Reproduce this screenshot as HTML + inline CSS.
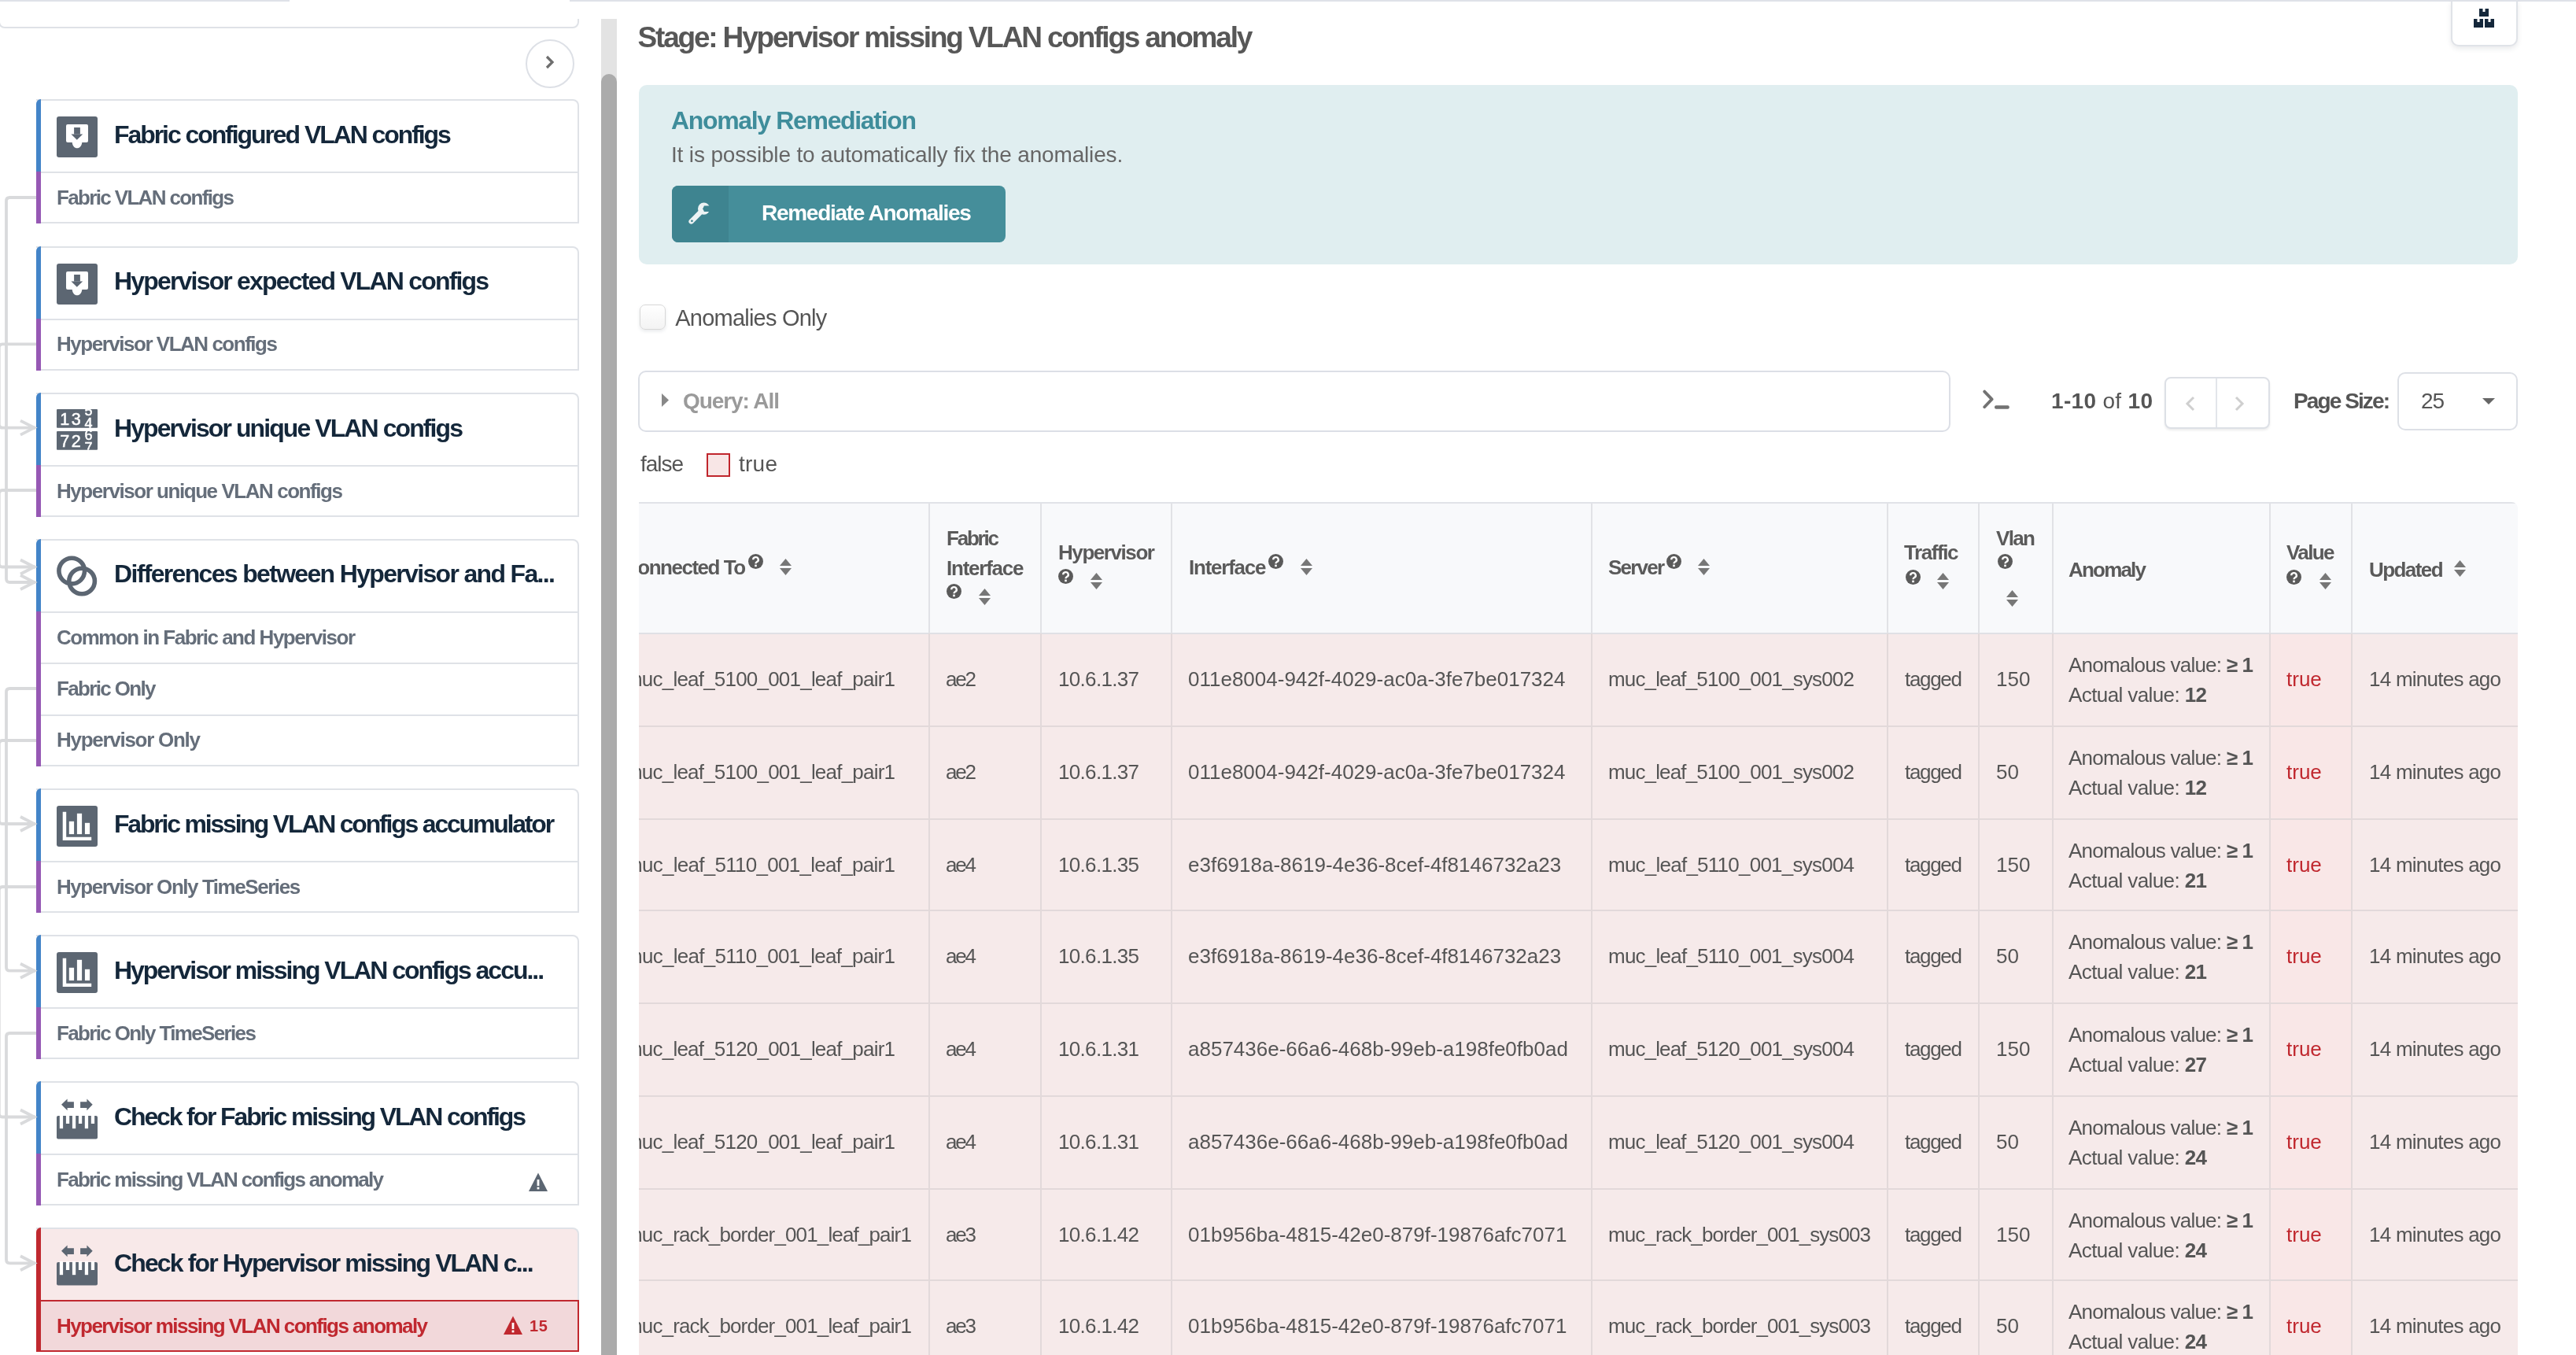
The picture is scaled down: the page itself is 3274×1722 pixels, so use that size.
<!DOCTYPE html><html><head><meta charset="utf-8"><style>html,body{margin:0;padding:0;width:3274px;height:1722px;overflow:hidden;background:#fff;position:relative;font-family:"Liberation Sans",sans-serif}.t{position:absolute;white-space:nowrap;line-height:1}#w{position:absolute;left:0;top:0;width:3274px;height:1722px;overflow:hidden;will-change:transform}</style></head><body><div id="w">
<div style="position:absolute;left:0px;top:0px;width:368px;height:2px;background:#dfe2e8"></div>
<div style="position:absolute;left:724px;top:0px;width:2550px;height:2px;background:#dfe2e8"></div>
<div style="position:absolute;left:0;top:24px;width:764px;height:1698px;overflow:hidden">
<div style="position:absolute;left:-2px;top:-40px;width:734px;height:48px;border:2px solid #dfe2e7;border-radius:8px;background:#fff"></div>
<div style="position:absolute;left:668px;top:26px;width:58px;height:58px;border:2px solid #dde0e6;border-radius:50%;background:#fff"></div>
<svg style="position:absolute;left:690px;top:45px" width="18" height="20" viewBox="0 0 18 20"><path d="M5 3 L12 10 L5 17" stroke="#6e6e6e" stroke-width="3.2" fill="none" stroke-linecap="butt" stroke-linejoin="miter"/></svg>
</div>
<div style="position:absolute;left:764px;top:24px;width:20px;height:1698px;background:#e3e3e3"></div>
<div style="position:absolute;left:764px;top:94px;width:20px;height:1700px;background:#ababab;border-radius:10px 10px 0 0"></div>
<div style="position:absolute;left:46px;top:126px;width:690px;height:158.0px;box-sizing:border-box;border:2px solid #dfe2e7;border-left:none;border-radius:0 8px 0 0;background:#fff"></div>
<div style="position:absolute;left:46px;top:126px;width:6px;height:92px;background:#4384c8;border-radius:7px 0 0 0"></div>
<div style="position:absolute;left:52px;top:218.0px;width:684px;height:2.0px;background:#dfe2e7"></div>
<div style="position:absolute;left:46px;top:218.0px;width:6px;height:66.0px;background:#9658b4"></div>
<div class="t" style="left:72.0px;top:237.5px;font-size:26px;font-weight:700;color:#656e7a;letter-spacing:-1.65px;">Fabric VLAN configs</div>
<svg style="position:absolute;left:72px;top:148px" width="52" height="52" viewBox="0 0 52 52">
<rect x="0" y="0" width="52" height="52" rx="3" fill="#5c6672"/>
<path d="M14 10 h24 a2 2 0 0 1 2 2 v19 a2 2 0 0 1 -2 2 h-5.7 c-0.5 4.5 -3 7.3 -6.3 7.3 c-3.3 0 -5.8 -2.8 -6.3 -7.3 h-5.7 a2 2 0 0 1 -2 -2 v-19 a2 2 0 0 1 2 -2 z" fill="#fff"/>
<rect x="22.1" y="14" width="7.8" height="8.6" fill="#5c6672"/>
<path d="M18.4 22.4 h14.8 l-7.4 7.4 z" fill="#5c6672"/>
</svg>
<div class="t" style="left:145.0px;top:154.9px;font-size:32px;font-weight:700;color:#14273a;letter-spacing:-2.07px;">Fabric configured VLAN configs</div>
<div style="position:absolute;left:46px;top:312.5px;width:690px;height:158.0px;box-sizing:border-box;border:2px solid #dfe2e7;border-left:none;border-radius:0 8px 0 0;background:#fff"></div>
<div style="position:absolute;left:46px;top:312.5px;width:6px;height:92px;background:#4384c8;border-radius:7px 0 0 0"></div>
<div style="position:absolute;left:52px;top:404.5px;width:684px;height:2.0px;background:#dfe2e7"></div>
<div style="position:absolute;left:46px;top:404.5px;width:6px;height:66.0px;background:#9658b4"></div>
<div class="t" style="left:72.0px;top:424.0px;font-size:26px;font-weight:700;color:#656e7a;letter-spacing:-1.48px;">Hypervisor VLAN configs</div>
<svg style="position:absolute;left:72px;top:334.5px" width="52" height="52" viewBox="0 0 52 52">
<rect x="0" y="0" width="52" height="52" rx="3" fill="#5c6672"/>
<path d="M14 10 h24 a2 2 0 0 1 2 2 v19 a2 2 0 0 1 -2 2 h-5.7 c-0.5 4.5 -3 7.3 -6.3 7.3 c-3.3 0 -5.8 -2.8 -6.3 -7.3 h-5.7 a2 2 0 0 1 -2 -2 v-19 a2 2 0 0 1 2 -2 z" fill="#fff"/>
<rect x="22.1" y="14" width="7.8" height="8.6" fill="#5c6672"/>
<path d="M18.4 22.4 h14.8 l-7.4 7.4 z" fill="#5c6672"/>
</svg>
<div class="t" style="left:145.0px;top:341.4px;font-size:32px;font-weight:700;color:#14273a;letter-spacing:-1.82px;">Hypervisor expected VLAN configs</div>
<div style="position:absolute;left:46px;top:499px;width:690px;height:158.0px;box-sizing:border-box;border:2px solid #dfe2e7;border-left:none;border-radius:0 8px 0 0;background:#fff"></div>
<div style="position:absolute;left:46px;top:499px;width:6px;height:92px;background:#4384c8;border-radius:7px 0 0 0"></div>
<div style="position:absolute;left:52px;top:591.0px;width:684px;height:2.0px;background:#dfe2e7"></div>
<div style="position:absolute;left:46px;top:591.0px;width:6px;height:66.0px;background:#9658b4"></div>
<div class="t" style="left:72.0px;top:610.5px;font-size:26px;font-weight:700;color:#656e7a;letter-spacing:-1.45px;">Hypervisor unique VLAN configs</div>
<svg style="position:absolute;left:72px;top:520px" width="52" height="52" viewBox="0 0 52 52">
<defs><clipPath id="cn520"><rect x="0" y="0" width="52" height="23.8"/><rect x="0" y="28.1" width="52" height="23.7"/></clipPath></defs>
<rect x="0" y="0" width="52" height="23.8" rx="1" fill="#5c6672"/>
<rect x="0" y="28.1" width="52" height="23.7" rx="1" fill="#5c6672"/>
<g clip-path="url(#cn520)" fill="#fff" stroke="#fff" stroke-width="0.5" font-family="Liberation Sans">
<text x="4.2" y="20.1" font-size="21.5">1</text><text x="18.8" y="20.1" font-size="21.5">3</text>
<text x="4.2" y="48" font-size="21.5">7</text><text x="18.8" y="48" font-size="21.5">2</text>
<text x="35.5" y="8.2" font-size="18">5</text><text x="35.5" y="24.1" font-size="18">4</text>
<text x="35.5" y="38.7" font-size="18">6</text><text x="35.5" y="54.5" font-size="18">7</text>
</g>
</svg>
<div class="t" style="left:145.0px;top:527.9px;font-size:32px;font-weight:700;color:#14273a;letter-spacing:-1.92px;">Hypervisor unique VLAN configs</div>
<div style="position:absolute;left:46px;top:684.5px;width:690px;height:289.0px;box-sizing:border-box;border:2px solid #dfe2e7;border-left:none;border-radius:0 8px 0 0;background:#fff"></div>
<div style="position:absolute;left:46px;top:684.5px;width:6px;height:92px;background:#4384c8;border-radius:7px 0 0 0"></div>
<div style="position:absolute;left:52px;top:776.5px;width:684px;height:2.0px;background:#dfe2e7"></div>
<div style="position:absolute;left:46px;top:776.5px;width:6px;height:67.5px;background:#9658b4"></div>
<div class="t" style="left:72.0px;top:796.7px;font-size:26px;font-weight:700;color:#656e7a;letter-spacing:-1.49px;">Common in Fabric and Hypervisor</div>
<div style="position:absolute;left:52px;top:842.0px;width:684px;height:2.0px;background:#dfe2e7"></div>
<div style="position:absolute;left:46px;top:842.0px;width:6px;height:67.5px;background:#9658b4"></div>
<div class="t" style="left:72.0px;top:862.2px;font-size:26px;font-weight:700;color:#656e7a;letter-spacing:-1.65px;">Fabric Only</div>
<div style="position:absolute;left:52px;top:907.5px;width:684px;height:2.0px;background:#dfe2e7"></div>
<div style="position:absolute;left:46px;top:907.5px;width:6px;height:66.0px;background:#9658b4"></div>
<div class="t" style="left:72.0px;top:927.0px;font-size:26px;font-weight:700;color:#656e7a;letter-spacing:-1.28px;">Hypervisor Only</div>
<svg style="position:absolute;left:68px;top:703.5px" width="56" height="56" viewBox="0 0 56 56">
<circle cx="23.2" cy="21.6" r="16.3" stroke="#5c6672" stroke-width="5.6" fill="none"/>
<circle cx="36.1" cy="34.5" r="16.3" stroke="#5c6672" stroke-width="5.6" fill="none"/>
</svg>
<div class="t" style="left:145.0px;top:713.4px;font-size:32px;font-weight:700;color:#14273a;letter-spacing:-1.67px;">Differences between Hypervisor and Fa...</div>
<div style="position:absolute;left:46px;top:1002px;width:690px;height:158.0px;box-sizing:border-box;border:2px solid #dfe2e7;border-left:none;border-radius:0 8px 0 0;background:#fff"></div>
<div style="position:absolute;left:46px;top:1002px;width:6px;height:92px;background:#4384c8;border-radius:7px 0 0 0"></div>
<div style="position:absolute;left:52px;top:1094.0px;width:684px;height:2.0px;background:#dfe2e7"></div>
<div style="position:absolute;left:46px;top:1094.0px;width:6px;height:66.0px;background:#9658b4"></div>
<div class="t" style="left:72.0px;top:1113.5px;font-size:26px;font-weight:700;color:#656e7a;letter-spacing:-1.45px;">Hypervisor Only TimeSeries</div>
<svg style="position:absolute;left:72px;top:1024px" width="52" height="52" viewBox="0 0 52 52">
<rect x="0" y="0" width="52" height="52" rx="3" fill="#5c6672"/>
<path d="M7.7 7.7 h4.5 v32.1 h32 v4.2 h-36.5 z" fill="#fff"/>
<rect x="15.8" y="19.8" width="6.3" height="16.3" fill="#fff"/>
<rect x="25.9" y="9.8" width="6.2" height="26.3" fill="#fff"/>
<rect x="35.9" y="21.8" width="6.2" height="14.3" fill="#fff"/>
</svg>
<div class="t" style="left:145.0px;top:1030.9px;font-size:32px;font-weight:700;color:#14273a;letter-spacing:-2.20px;">Fabric missing VLAN configs accumulator</div>
<div style="position:absolute;left:46px;top:1188px;width:690px;height:158.0px;box-sizing:border-box;border:2px solid #dfe2e7;border-left:none;border-radius:0 8px 0 0;background:#fff"></div>
<div style="position:absolute;left:46px;top:1188px;width:6px;height:92px;background:#4384c8;border-radius:7px 0 0 0"></div>
<div style="position:absolute;left:52px;top:1280.0px;width:684px;height:2.0px;background:#dfe2e7"></div>
<div style="position:absolute;left:46px;top:1280.0px;width:6px;height:66.0px;background:#9658b4"></div>
<div class="t" style="left:72.0px;top:1299.5px;font-size:26px;font-weight:700;color:#656e7a;letter-spacing:-1.65px;">Fabric Only TimeSeries</div>
<svg style="position:absolute;left:72px;top:1210px" width="52" height="52" viewBox="0 0 52 52">
<rect x="0" y="0" width="52" height="52" rx="3" fill="#5c6672"/>
<path d="M7.7 7.7 h4.5 v32.1 h32 v4.2 h-36.5 z" fill="#fff"/>
<rect x="15.8" y="19.8" width="6.3" height="16.3" fill="#fff"/>
<rect x="25.9" y="9.8" width="6.2" height="26.3" fill="#fff"/>
<rect x="35.9" y="21.8" width="6.2" height="14.3" fill="#fff"/>
</svg>
<div class="t" style="left:145.0px;top:1216.9px;font-size:32px;font-weight:700;color:#14273a;letter-spacing:-2.03px;">Hypervisor missing VLAN configs accu...</div>
<div style="position:absolute;left:46px;top:1374px;width:690px;height:158.0px;box-sizing:border-box;border:2px solid #dfe2e7;border-left:none;border-radius:0 8px 0 0;background:#fff"></div>
<div style="position:absolute;left:46px;top:1374px;width:6px;height:92px;background:#4384c8;border-radius:7px 0 0 0"></div>
<div style="position:absolute;left:52px;top:1466.0px;width:684px;height:2.0px;background:#dfe2e7"></div>
<div style="position:absolute;left:46px;top:1466.0px;width:6px;height:66.0px;background:#9658b4"></div>
<div class="t" style="left:72.0px;top:1485.5px;font-size:26px;font-weight:700;color:#656e7a;letter-spacing:-1.70px;">Fabric missing VLAN configs anomaly</div>
<svg style="position:absolute;left:72px;top:1396px" width="52" height="52" viewBox="0 0 52 52">
<path d="M6 7.7 L13.6 0.4 V4.2 H21.9 V11.9 H13.6 V15.3 Z" fill="#5c6672"/>
<path d="M45.7 7.7 L38.4 0.4 V4.2 H30.1 V11.9 H38.4 V15.3 Z" fill="#5c6672"/>
<rect x="0" y="22" width="52" height="29.6" rx="2" fill="#5c6672"/>
<rect x="3.8" y="21" width="4.3" height="17.2" fill="#fff"/><rect x="11.9" y="21" width="4.3" height="11" fill="#fff"/><rect x="19.9" y="21" width="4.3" height="17.2" fill="#fff"/><rect x="27.9" y="21" width="4.3" height="11" fill="#fff"/><rect x="35.8" y="21" width="4.3" height="17.2" fill="#fff"/><rect x="43.8" y="21" width="4.3" height="11" fill="#fff"/>
</svg>
<div class="t" style="left:145.0px;top:1402.9px;font-size:32px;font-weight:700;color:#14273a;letter-spacing:-2.14px;">Check for Fabric missing VLAN configs</div>
<svg style="position:absolute;left:672px;top:1490px" width="24" height="24" viewBox="0 0 24 24">
<path d="M12 0.5 L24 24 H0 Z" fill="#5c6672"/>
<rect x="10.6" y="9" width="2.8" height="8" fill="#fff"/>
<rect x="10.6" y="18.6" width="2.8" height="2.8" fill="#fff"/>
</svg>
<div style="position:absolute;left:46px;top:1560px;width:690px;height:158.0px;box-sizing:border-box;border:2px solid #dfe2e7;border-left:none;border-radius:0 8px 0 0;background:#f8e9e9"></div>
<div style="position:absolute;left:46px;top:1560px;width:6px;height:92px;background:#c0282f;border-radius:7px 0 0 0"></div>
<div style="position:absolute;left:52px;top:1652.0px;width:684px;height:2.0px;background:#dfe2e7"></div>
<div style="position:absolute;left:52px;top:1652.0px;width:684px;height:66.0px;box-sizing:border-box;border:2px solid #c0282f;border-left:none;background:#f2d8da"></div>
<div style="position:absolute;left:46px;top:1652.0px;width:6px;height:66.0px;background:#c0282f"></div>
<div class="t" style="left:72.0px;top:1671.5px;font-size:26px;font-weight:700;color:#c0282f;letter-spacing:-1.57px;">Hypervisor missing VLAN configs anomaly</div>
<svg style="position:absolute;left:72px;top:1582px" width="52" height="52" viewBox="0 0 52 52">
<path d="M6 7.7 L13.6 0.4 V4.2 H21.9 V11.9 H13.6 V15.3 Z" fill="#5c6672"/>
<path d="M45.7 7.7 L38.4 0.4 V4.2 H30.1 V11.9 H38.4 V15.3 Z" fill="#5c6672"/>
<rect x="0" y="22" width="52" height="29.6" rx="2" fill="#5c6672"/>
<rect x="3.8" y="21" width="4.3" height="17.2" fill="#fff"/><rect x="11.9" y="21" width="4.3" height="11" fill="#fff"/><rect x="19.9" y="21" width="4.3" height="17.2" fill="#fff"/><rect x="27.9" y="21" width="4.3" height="11" fill="#fff"/><rect x="35.8" y="21" width="4.3" height="17.2" fill="#fff"/><rect x="43.8" y="21" width="4.3" height="11" fill="#fff"/>
</svg>
<div class="t" style="left:145.0px;top:1588.9px;font-size:32px;font-weight:700;color:#14273a;letter-spacing:-1.87px;">Check for Hypervisor missing VLAN c...</div>
<svg style="position:absolute;left:640px;top:1671.5px" width="24" height="24" viewBox="0 0 24 24">
<path d="M12 0.5 L24 24 H0 Z" fill="#c0282f"/>
<rect x="10.6" y="9" width="2.8" height="8" fill="#fff"/>
<rect x="10.6" y="18.6" width="2.8" height="2.8" fill="#fff"/>
</svg>
<div class="t" style="left:673.0px;top:1675.1px;font-size:20px;font-weight:700;color:#c0282f;letter-spacing:0.75px;">15</div>
<svg style="position:absolute;left:0;top:0" width="50" height="1722" viewBox="0 0 50 1722"><path d="M46 251 H12.5 Q8 251 8 255.5 V735.5 Q8 740 12.5 740 H45" stroke="#d9dadc" stroke-width="3.8" fill="none"/><path d="M26 731 L43.5 740 L26 749" stroke="#d9dadc" stroke-width="3.8" fill="none"/><path d="M46 437.3 H3.3 Q-1.2 437.3 -1.2 441.8 V539.1 Q-1.2 543.6 3.3 543.6 H45" stroke="#d9dadc" stroke-width="3.8" fill="none"/><path d="M26 534.6 L43.5 543.6 L26 552.6" stroke="#d9dadc" stroke-width="3.8" fill="none"/><path d="M46 623 H3.3 Q-1.2 623 -1.2 627.5 V716.0 Q-1.2 720.5 3.3 720.5 H45" stroke="#d9dadc" stroke-width="3.8" fill="none"/><path d="M26 711.5 L43.5 720.5 L26 729.5" stroke="#d9dadc" stroke-width="3.8" fill="none"/><path d="M46 875 H12.5 Q8 875 8 879.5 V1229.2 Q8 1233.7 12.5 1233.7 H45" stroke="#d9dadc" stroke-width="3.8" fill="none"/><path d="M26 1224.7 L43.5 1233.7 L26 1242.7" stroke="#d9dadc" stroke-width="3.8" fill="none"/><path d="M46 941 H3.3 Q-1.2 941 -1.2 945.5 V1042.5 Q-1.2 1047 3.3 1047 H45" stroke="#d9dadc" stroke-width="3.8" fill="none"/><path d="M26 1038 L43.5 1047 L26 1056" stroke="#d9dadc" stroke-width="3.8" fill="none"/><path d="M46 1127 H3.3 Q-1.2 1127 -1.2 1131.5 V1415.0 Q-1.2 1419.5 3.3 1419.5 H45" stroke="#d9dadc" stroke-width="3.8" fill="none"/><path d="M26 1410.5 L43.5 1419.5 L26 1428.5" stroke="#d9dadc" stroke-width="3.8" fill="none"/><path d="M46 1313 H12.5 Q8 1313 8 1317.5 V1600.8 Q8 1605.3 12.5 1605.3 H45" stroke="#d9dadc" stroke-width="3.8" fill="none"/><path d="M26 1596.3 L43.5 1605.3 L26 1614.3" stroke="#d9dadc" stroke-width="3.8" fill="none"/></svg>
<div class="t" style="left:810.5px;top:29.0px;font-size:37px;font-weight:700;color:#575757;letter-spacing:-2.18px;">Stage: Hypervisor missing VLAN configs anomaly</div>
<div style="position:absolute;left:3114.5px;top:0px;width:85px;height:58.5px;box-sizing:border-box;border:2px solid #e0e3e8;border-top:none;border-radius:0 0 10px 10px;background:#fff;box-shadow:0 3px 6px rgba(40,50,70,0.10)"></div>
<div style="position:absolute;left:3114px;top:0px;width:86px;height:2px;background:#dfe2e8"></div>
<svg style="position:absolute;left:3144px;top:11px" width="26" height="24" viewBox="0 0 26 24">
<rect x="7" y="0" width="12" height="10" fill="#14273a"/><rect x="0" y="13" width="12" height="11" fill="#14273a"/><rect x="14" y="13" width="12" height="11" fill="#14273a"/>
<rect x="11.5" y="0" width="3" height="4" fill="#fff"/><rect x="4.5" y="13" width="3" height="4" fill="#fff"/><rect x="18.5" y="13" width="3" height="4" fill="#fff"/>
</svg>
<div style="position:absolute;left:812px;top:108px;width:2388px;height:228px;background:#e0eef0;border-radius:10px"></div>
<div class="t" style="left:853.0px;top:136.9px;font-size:32px;font-weight:700;color:#3f8d9b;letter-spacing:-1.34px;">Anomaly Remediation</div>
<div class="t" style="left:853.0px;top:182.8px;font-size:28px;font-weight:400;color:#666;letter-spacing:-0.16px;">It is possible to automatically fix the anomalies.</div>
<div style="position:absolute;left:854px;top:236px;width:424px;height:72px;background:#458e9a;border-radius:8px;overflow:hidden"><div style="position:absolute;left:0;top:0;width:72px;height:72px;background:#3e8490"></div></div>
<svg style="position:absolute;left:860px;top:245px" width="60" height="55" viewBox="0 0 60 55">
<path d="M31.5 23.5 L18.6 36.4" stroke="#edf3f4" stroke-width="6.4" stroke-linecap="round"/>
<circle cx="34.6" cy="20.2" r="7.6" fill="#edf3f4"/>
<path d="M33.2 20.3 L35 16.6 H45 V24 H35 Z" fill="#3e8490"/>
<circle cx="19.4" cy="35.8" r="1.4" fill="#3e8490"/>
</svg>
<div class="t" style="left:968.0px;top:257.3px;font-size:28px;font-weight:700;color:#fff;letter-spacing:-1.28px;">Remediate Anomalies</div>
<div style="position:absolute;left:812.5px;top:386.5px;width:33px;height:32px;box-sizing:border-box;border:1.8px solid #d8d8d8;border-radius:7px;background:linear-gradient(#fff,#f3f3f3);box-shadow:0 2px 4px rgba(60,70,90,0.12)"></div>
<div class="t" style="left:858.3px;top:389.7px;font-size:29px;font-weight:400;color:#555;letter-spacing:-0.78px;">Anomalies Only</div>
<div style="position:absolute;left:811px;top:471px;width:1668px;height:78px;box-sizing:border-box;border:2px solid #dcdfe6;border-radius:10px;background:#fff"></div>
<svg style="position:absolute;left:841px;top:500px" width="10" height="17" viewBox="0 0 10 17"><path d="M0 0 L9 8.5 L0 17 Z" fill="#888"/></svg>
<div class="t" style="left:868.0px;top:496.3px;font-size:28px;font-weight:700;color:#9a9a9a;letter-spacing:-1.09px;">Query: All</div>
<svg style="position:absolute;left:2510px;top:488px" width="50" height="40" viewBox="0 0 50 40"><path d="M12.2 9.6 L21.6 19.4 L12.2 29.2" stroke="#727272" stroke-width="3.8" stroke-linecap="round" stroke-linejoin="round" fill="none"/><rect x="25" y="27.2" width="18.8" height="4.5" rx="2" fill="#727272"/></svg>
<div class="t" style="left:2607.0px;top:496.3px;font-size:28px;font-weight:700;color:#555;letter-spacing:0.32px;">1-10 <span style="font-weight:400">of</span> 10</div>
<div style="position:absolute;left:2751px;top:479px;width:134px;height:66px;box-sizing:border-box;border:2px solid #dde0e6;border-radius:8px;background:#fff;box-shadow:0 2px 3px rgba(0,0,0,0.08)"></div>
<div style="position:absolute;left:2816px;top:481px;width:2px;height:62px;background:#e3e5ea"></div>
<svg style="position:absolute;left:2776px;top:502px" width="16" height="22" viewBox="0 0 16 22"><path d="M12 3 L4 11 L12 19" stroke="#cfcfcf" stroke-width="3" fill="none"/></svg>
<svg style="position:absolute;left:2838px;top:502px" width="16" height="22" viewBox="0 0 16 22"><path d="M4 3 L12 11 L4 19" stroke="#cfcfcf" stroke-width="3" fill="none"/></svg>
<div class="t" style="left:2915.0px;top:496.3px;font-size:28px;font-weight:700;color:#555;letter-spacing:-1.90px;">Page Size:</div>
<div style="position:absolute;left:3047px;top:473px;width:153px;height:74px;box-sizing:border-box;border:2px solid #dde0e6;border-radius:10px;background:#fff"></div>
<div class="t" style="left:3077.0px;top:496.3px;font-size:28px;font-weight:400;color:#555;letter-spacing:-1.16px;">25</div>
<svg style="position:absolute;left:3155px;top:506px" width="16" height="8" viewBox="0 0 16 8"><path d="M0 0 H16 L8 8 Z" fill="#666"/></svg>
<div class="t" style="left:814.0px;top:576.3px;font-size:28px;font-weight:400;color:#555;letter-spacing:-1.04px;">false</div>
<div style="position:absolute;left:898px;top:576px;width:30px;height:30px;box-sizing:border-box;border:2.5px solid #c0262d;background:#f8e6e6"></div>
<div class="t" style="left:939.0px;top:576.3px;font-size:28px;font-weight:400;color:#555;letter-spacing:0.25px;">true</div>
<div style="position:absolute;left:812px;top:638px;width:2388px;height:1100px;overflow:hidden;border-radius:0 8px 0 0">
<div style="position:absolute;left:0px;top:0px;width:2388px;height:2px;background:#e1e3e8"></div>
<div style="position:absolute;left:0px;top:2px;width:2388px;height:164px;background:#f8f9fb"></div>
<div style="position:absolute;left:0px;top:167px;width:2388px;height:940px;background:#f6eaea"></div>
<div style="position:absolute;left:2073px;top:167px;width:104px;height:940px;background:#f9e7e7"></div>
<div style="position:absolute;left:0px;top:166px;width:2388px;height:2px;background:#e0e1e5"></div>
<div style="position:absolute;left:0px;top:283.5px;width:2388px;height:2.0px;background:#e2d9da"></div>
<div style="position:absolute;left:0px;top:401.5px;width:2388px;height:2.0px;background:#e2d9da"></div>
<div style="position:absolute;left:0px;top:517.5px;width:2388px;height:2.0px;background:#e2d9da"></div>
<div style="position:absolute;left:0px;top:635.5px;width:2388px;height:2.0px;background:#e2d9da"></div>
<div style="position:absolute;left:0px;top:753.5px;width:2388px;height:2.0px;background:#e2d9da"></div>
<div style="position:absolute;left:0px;top:871.5px;width:2388px;height:2.0px;background:#e2d9da"></div>
<div style="position:absolute;left:0px;top:988px;width:2388px;height:2px;background:#e2d9da"></div>
<div style="position:absolute;left:368px;top:2px;width:2px;height:165px;background:#e1e2e6"></div>
<div style="position:absolute;left:368px;top:167px;width:2px;height:940px;background:#e2d9da"></div>
<div style="position:absolute;left:510px;top:2px;width:2px;height:165px;background:#e1e2e6"></div>
<div style="position:absolute;left:510px;top:167px;width:2px;height:940px;background:#e2d9da"></div>
<div style="position:absolute;left:676px;top:2px;width:2px;height:165px;background:#e1e2e6"></div>
<div style="position:absolute;left:676px;top:167px;width:2px;height:940px;background:#e2d9da"></div>
<div style="position:absolute;left:1210px;top:2px;width:2px;height:165px;background:#e1e2e6"></div>
<div style="position:absolute;left:1210px;top:167px;width:2px;height:940px;background:#e2d9da"></div>
<div style="position:absolute;left:1586px;top:2px;width:2px;height:165px;background:#e1e2e6"></div>
<div style="position:absolute;left:1586px;top:167px;width:2px;height:940px;background:#e2d9da"></div>
<div style="position:absolute;left:1702px;top:2px;width:2px;height:165px;background:#e1e2e6"></div>
<div style="position:absolute;left:1702px;top:167px;width:2px;height:940px;background:#e2d9da"></div>
<div style="position:absolute;left:1796px;top:2px;width:2px;height:165px;background:#e1e2e6"></div>
<div style="position:absolute;left:1796px;top:167px;width:2px;height:940px;background:#e2d9da"></div>
<div style="position:absolute;left:2072px;top:2px;width:2px;height:165px;background:#e1e2e6"></div>
<div style="position:absolute;left:2072px;top:167px;width:2px;height:940px;background:#e2d9da"></div>
<div style="position:absolute;left:2176px;top:2px;width:2px;height:165px;background:#e1e2e6"></div>
<div style="position:absolute;left:2176px;top:167px;width:2px;height:940px;background:#e2d9da"></div>
</div>
<div class="t" style="left:793.0px;top:707.8px;font-size:26px;font-weight:700;color:#5a5a5a;letter-spacing:-1.49px;">Connected To</div>
<svg style="position:absolute;left:951px;top:704px" width="19" height="19" viewBox="0 0 19 19"><circle cx="9.5" cy="9.5" r="9.5" fill="#5a5a5a"/><path d="M6.2 7.2 a3.3 3.1 0 1 1 4.8 2.8 c-1 .6 -1.5 1 -1.5 2.2" stroke="#fff" stroke-width="2.4" fill="none"/><rect x="8.2" y="13.6" width="2.6" height="2.6" fill="#fff"/></svg>
<svg style="position:absolute;left:991px;top:710px" width="15" height="21" viewBox="0 0 15 21"><path d="M7.5 0 L15 9 H0 Z" fill="#777"/><path d="M0 12 H15 L7.5 21 Z" fill="#777"/></svg>
<div class="t" style="left:1203.0px;top:670.8px;font-size:26px;font-weight:700;color:#5a5a5a;letter-spacing:-2.21px;">Fabric</div>
<div class="t" style="left:1203.0px;top:708.8px;font-size:26px;font-weight:700;color:#5a5a5a;letter-spacing:-1.24px;">Interface</div>
<svg style="position:absolute;left:1203px;top:742px" width="19" height="19" viewBox="0 0 19 19"><circle cx="9.5" cy="9.5" r="9.5" fill="#5a5a5a"/><path d="M6.2 7.2 a3.3 3.1 0 1 1 4.8 2.8 c-1 .6 -1.5 1 -1.5 2.2" stroke="#fff" stroke-width="2.4" fill="none"/><rect x="8.2" y="13.6" width="2.6" height="2.6" fill="#fff"/></svg>
<svg style="position:absolute;left:1244px;top:748px" width="15" height="21" viewBox="0 0 15 21"><path d="M7.5 0 L15 9 H0 Z" fill="#777"/><path d="M0 12 H15 L7.5 21 Z" fill="#777"/></svg>
<div class="t" style="left:1345.0px;top:688.8px;font-size:26px;font-weight:700;color:#5a5a5a;letter-spacing:-1.43px;">Hypervisor</div>
<svg style="position:absolute;left:1345px;top:723px" width="19" height="19" viewBox="0 0 19 19"><circle cx="9.5" cy="9.5" r="9.5" fill="#5a5a5a"/><path d="M6.2 7.2 a3.3 3.1 0 1 1 4.8 2.8 c-1 .6 -1.5 1 -1.5 2.2" stroke="#fff" stroke-width="2.4" fill="none"/><rect x="8.2" y="13.6" width="2.6" height="2.6" fill="#fff"/></svg>
<svg style="position:absolute;left:1386px;top:728px" width="15" height="21" viewBox="0 0 15 21"><path d="M7.5 0 L15 9 H0 Z" fill="#777"/><path d="M0 12 H15 L7.5 21 Z" fill="#777"/></svg>
<div class="t" style="left:1511.0px;top:707.8px;font-size:26px;font-weight:700;color:#5a5a5a;letter-spacing:-1.24px;">Interface</div>
<svg style="position:absolute;left:1612px;top:704px" width="19" height="19" viewBox="0 0 19 19"><circle cx="9.5" cy="9.5" r="9.5" fill="#5a5a5a"/><path d="M6.2 7.2 a3.3 3.1 0 1 1 4.8 2.8 c-1 .6 -1.5 1 -1.5 2.2" stroke="#fff" stroke-width="2.4" fill="none"/><rect x="8.2" y="13.6" width="2.6" height="2.6" fill="#fff"/></svg>
<svg style="position:absolute;left:1653px;top:710px" width="15" height="21" viewBox="0 0 15 21"><path d="M7.5 0 L15 9 H0 Z" fill="#777"/><path d="M0 12 H15 L7.5 21 Z" fill="#777"/></svg>
<div class="t" style="left:2044.0px;top:707.8px;font-size:26px;font-weight:700;color:#5a5a5a;letter-spacing:-1.79px;">Server</div>
<svg style="position:absolute;left:2118px;top:704px" width="19" height="19" viewBox="0 0 19 19"><circle cx="9.5" cy="9.5" r="9.5" fill="#5a5a5a"/><path d="M6.2 7.2 a3.3 3.1 0 1 1 4.8 2.8 c-1 .6 -1.5 1 -1.5 2.2" stroke="#fff" stroke-width="2.4" fill="none"/><rect x="8.2" y="13.6" width="2.6" height="2.6" fill="#fff"/></svg>
<svg style="position:absolute;left:2158px;top:710px" width="15" height="21" viewBox="0 0 15 21"><path d="M7.5 0 L15 9 H0 Z" fill="#777"/><path d="M0 12 H15 L7.5 21 Z" fill="#777"/></svg>
<div class="t" style="left:2420.0px;top:688.8px;font-size:26px;font-weight:700;color:#5a5a5a;letter-spacing:-1.42px;">Traffic</div>
<svg style="position:absolute;left:2422px;top:724px" width="19" height="19" viewBox="0 0 19 19"><circle cx="9.5" cy="9.5" r="9.5" fill="#5a5a5a"/><path d="M6.2 7.2 a3.3 3.1 0 1 1 4.8 2.8 c-1 .6 -1.5 1 -1.5 2.2" stroke="#fff" stroke-width="2.4" fill="none"/><rect x="8.2" y="13.6" width="2.6" height="2.6" fill="#fff"/></svg>
<svg style="position:absolute;left:2462px;top:728px" width="15" height="21" viewBox="0 0 15 21"><path d="M7.5 0 L15 9 H0 Z" fill="#777"/><path d="M0 12 H15 L7.5 21 Z" fill="#777"/></svg>
<div class="t" style="left:2537.0px;top:670.8px;font-size:26px;font-weight:700;color:#5a5a5a;letter-spacing:-1.64px;">Vlan</div>
<svg style="position:absolute;left:2539px;top:704px" width="19" height="19" viewBox="0 0 19 19"><circle cx="9.5" cy="9.5" r="9.5" fill="#5a5a5a"/><path d="M6.2 7.2 a3.3 3.1 0 1 1 4.8 2.8 c-1 .6 -1.5 1 -1.5 2.2" stroke="#fff" stroke-width="2.4" fill="none"/><rect x="8.2" y="13.6" width="2.6" height="2.6" fill="#fff"/></svg>
<svg style="position:absolute;left:2550px;top:750px" width="15" height="21" viewBox="0 0 15 21"><path d="M7.5 0 L15 9 H0 Z" fill="#777"/><path d="M0 12 H15 L7.5 21 Z" fill="#777"/></svg>
<div class="t" style="left:2629.0px;top:710.8px;font-size:26px;font-weight:700;color:#5a5a5a;letter-spacing:-1.80px;">Anomaly</div>
<div class="t" style="left:2906.0px;top:688.8px;font-size:26px;font-weight:700;color:#5a5a5a;letter-spacing:-1.61px;">Value</div>
<svg style="position:absolute;left:2906px;top:724px" width="19" height="19" viewBox="0 0 19 19"><circle cx="9.5" cy="9.5" r="9.5" fill="#5a5a5a"/><path d="M6.2 7.2 a3.3 3.1 0 1 1 4.8 2.8 c-1 .6 -1.5 1 -1.5 2.2" stroke="#fff" stroke-width="2.4" fill="none"/><rect x="8.2" y="13.6" width="2.6" height="2.6" fill="#fff"/></svg>
<svg style="position:absolute;left:2948px;top:728px" width="15" height="21" viewBox="0 0 15 21"><path d="M7.5 0 L15 9 H0 Z" fill="#777"/><path d="M0 12 H15 L7.5 21 Z" fill="#777"/></svg>
<div class="t" style="left:3011.0px;top:710.8px;font-size:26px;font-weight:700;color:#5a5a5a;letter-spacing:-1.58px;">Updated</div>
<svg style="position:absolute;left:3119px;top:712px" width="15" height="21" viewBox="0 0 15 21"><path d="M7.5 0 L15 9 H0 Z" fill="#777"/><path d="M0 12 H15 L7.5 21 Z" fill="#777"/></svg>
<div style="position:absolute;left:785px;top:640px;width:27px;height:165px;background:#fff"></div>
<div style="position:absolute;left:812px;top:805px;width:2388px;height:917px;overflow:hidden">
<div class="t" style="left:-17.0px;top:45.0px;font-size:26px;font-weight:400;color:#555;letter-spacing:-0.79px;">muc_leaf_5100_001_leaf_pair1</div>
<div class="t" style="left:390.0px;top:45.0px;font-size:26px;font-weight:400;color:#555;letter-spacing:-2.20px;">ae2</div>
<div class="t" style="left:533.0px;top:45.0px;font-size:26px;font-weight:400;color:#555;letter-spacing:-0.68px;">10.6.1.37</div>
<div class="t" style="left:698.0px;top:45.0px;font-size:26px;font-weight:400;color:#555;">011e8004-942f-4029-ac0a-3fe7be017324</div>
<div class="t" style="left:1232.0px;top:45.0px;font-size:26px;font-weight:400;color:#555;letter-spacing:-0.85px;">muc_leaf_5100_001_sys002</div>
<div class="t" style="left:1609.0px;top:45.0px;font-size:26px;font-weight:400;color:#555;letter-spacing:-1.31px;">tagged</div>
<div class="t" style="left:1725.0px;top:45.0px;font-size:26px;font-weight:400;color:#555;">150</div>
<div class="t" style="left:1817.0px;top:27.0px;font-size:26px;font-weight:400;color:#555;letter-spacing:-0.78px;">Anomalous value: <b>≥ 1</b></div>
<div class="t" style="left:1817.0px;top:65.0px;font-size:26px;font-weight:400;color:#555;letter-spacing:-0.60px;">Actual value: <b>12</b></div>
<div class="t" style="left:2094.0px;top:45.0px;font-size:26px;font-weight:400;color:#c0282f;">true</div>
<div class="t" style="left:2199.0px;top:45.0px;font-size:26px;font-weight:400;color:#555;letter-spacing:-0.75px;">14 minutes ago</div>
<div class="t" style="left:-17.0px;top:162.5px;font-size:26px;font-weight:400;color:#555;letter-spacing:-0.79px;">muc_leaf_5100_001_leaf_pair1</div>
<div class="t" style="left:390.0px;top:162.5px;font-size:26px;font-weight:400;color:#555;letter-spacing:-2.20px;">ae2</div>
<div class="t" style="left:533.0px;top:162.5px;font-size:26px;font-weight:400;color:#555;letter-spacing:-0.68px;">10.6.1.37</div>
<div class="t" style="left:698.0px;top:162.5px;font-size:26px;font-weight:400;color:#555;">011e8004-942f-4029-ac0a-3fe7be017324</div>
<div class="t" style="left:1232.0px;top:162.5px;font-size:26px;font-weight:400;color:#555;letter-spacing:-0.85px;">muc_leaf_5100_001_sys002</div>
<div class="t" style="left:1609.0px;top:162.5px;font-size:26px;font-weight:400;color:#555;letter-spacing:-1.31px;">tagged</div>
<div class="t" style="left:1725.0px;top:162.5px;font-size:26px;font-weight:400;color:#555;">50</div>
<div class="t" style="left:1817.0px;top:144.5px;font-size:26px;font-weight:400;color:#555;letter-spacing:-0.78px;">Anomalous value: <b>≥ 1</b></div>
<div class="t" style="left:1817.0px;top:182.5px;font-size:26px;font-weight:400;color:#555;letter-spacing:-0.60px;">Actual value: <b>12</b></div>
<div class="t" style="left:2094.0px;top:162.5px;font-size:26px;font-weight:400;color:#c0282f;">true</div>
<div class="t" style="left:2199.0px;top:162.5px;font-size:26px;font-weight:400;color:#555;letter-spacing:-0.75px;">14 minutes ago</div>
<div class="t" style="left:-17.0px;top:280.5px;font-size:26px;font-weight:400;color:#555;letter-spacing:-0.72px;">muc_leaf_5110_001_leaf_pair1</div>
<div class="t" style="left:390.0px;top:280.5px;font-size:26px;font-weight:400;color:#555;letter-spacing:-2.20px;">ae4</div>
<div class="t" style="left:533.0px;top:280.5px;font-size:26px;font-weight:400;color:#555;letter-spacing:-0.68px;">10.6.1.35</div>
<div class="t" style="left:698.0px;top:280.5px;font-size:26px;font-weight:400;color:#555;">e3f6918a-8619-4e36-8cef-4f8146732a23</div>
<div class="t" style="left:1232.0px;top:280.5px;font-size:26px;font-weight:400;color:#555;letter-spacing:-0.76px;">muc_leaf_5110_001_sys004</div>
<div class="t" style="left:1609.0px;top:280.5px;font-size:26px;font-weight:400;color:#555;letter-spacing:-1.31px;">tagged</div>
<div class="t" style="left:1725.0px;top:280.5px;font-size:26px;font-weight:400;color:#555;">150</div>
<div class="t" style="left:1817.0px;top:262.5px;font-size:26px;font-weight:400;color:#555;letter-spacing:-0.78px;">Anomalous value: <b>≥ 1</b></div>
<div class="t" style="left:1817.0px;top:300.5px;font-size:26px;font-weight:400;color:#555;letter-spacing:-0.60px;">Actual value: <b>21</b></div>
<div class="t" style="left:2094.0px;top:280.5px;font-size:26px;font-weight:400;color:#c0282f;">true</div>
<div class="t" style="left:2199.0px;top:280.5px;font-size:26px;font-weight:400;color:#555;letter-spacing:-0.75px;">14 minutes ago</div>
<div class="t" style="left:-17.0px;top:396.5px;font-size:26px;font-weight:400;color:#555;letter-spacing:-0.72px;">muc_leaf_5110_001_leaf_pair1</div>
<div class="t" style="left:390.0px;top:396.5px;font-size:26px;font-weight:400;color:#555;letter-spacing:-2.20px;">ae4</div>
<div class="t" style="left:533.0px;top:396.5px;font-size:26px;font-weight:400;color:#555;letter-spacing:-0.68px;">10.6.1.35</div>
<div class="t" style="left:698.0px;top:396.5px;font-size:26px;font-weight:400;color:#555;">e3f6918a-8619-4e36-8cef-4f8146732a23</div>
<div class="t" style="left:1232.0px;top:396.5px;font-size:26px;font-weight:400;color:#555;letter-spacing:-0.76px;">muc_leaf_5110_001_sys004</div>
<div class="t" style="left:1609.0px;top:396.5px;font-size:26px;font-weight:400;color:#555;letter-spacing:-1.31px;">tagged</div>
<div class="t" style="left:1725.0px;top:396.5px;font-size:26px;font-weight:400;color:#555;">50</div>
<div class="t" style="left:1817.0px;top:378.5px;font-size:26px;font-weight:400;color:#555;letter-spacing:-0.78px;">Anomalous value: <b>≥ 1</b></div>
<div class="t" style="left:1817.0px;top:416.5px;font-size:26px;font-weight:400;color:#555;letter-spacing:-0.60px;">Actual value: <b>21</b></div>
<div class="t" style="left:2094.0px;top:396.5px;font-size:26px;font-weight:400;color:#c0282f;">true</div>
<div class="t" style="left:2199.0px;top:396.5px;font-size:26px;font-weight:400;color:#555;letter-spacing:-0.75px;">14 minutes ago</div>
<div class="t" style="left:-17.0px;top:514.5px;font-size:26px;font-weight:400;color:#555;letter-spacing:-0.79px;">muc_leaf_5120_001_leaf_pair1</div>
<div class="t" style="left:390.0px;top:514.5px;font-size:26px;font-weight:400;color:#555;letter-spacing:-2.20px;">ae4</div>
<div class="t" style="left:533.0px;top:514.5px;font-size:26px;font-weight:400;color:#555;letter-spacing:-0.68px;">10.6.1.31</div>
<div class="t" style="left:698.0px;top:514.5px;font-size:26px;font-weight:400;color:#555;">a857436e-66a6-468b-99eb-a198fe0fb0ad</div>
<div class="t" style="left:1232.0px;top:514.5px;font-size:26px;font-weight:400;color:#555;letter-spacing:-0.85px;">muc_leaf_5120_001_sys004</div>
<div class="t" style="left:1609.0px;top:514.5px;font-size:26px;font-weight:400;color:#555;letter-spacing:-1.31px;">tagged</div>
<div class="t" style="left:1725.0px;top:514.5px;font-size:26px;font-weight:400;color:#555;">150</div>
<div class="t" style="left:1817.0px;top:496.5px;font-size:26px;font-weight:400;color:#555;letter-spacing:-0.78px;">Anomalous value: <b>≥ 1</b></div>
<div class="t" style="left:1817.0px;top:534.5px;font-size:26px;font-weight:400;color:#555;letter-spacing:-0.60px;">Actual value: <b>27</b></div>
<div class="t" style="left:2094.0px;top:514.5px;font-size:26px;font-weight:400;color:#c0282f;">true</div>
<div class="t" style="left:2199.0px;top:514.5px;font-size:26px;font-weight:400;color:#555;letter-spacing:-0.75px;">14 minutes ago</div>
<div class="t" style="left:-17.0px;top:632.5px;font-size:26px;font-weight:400;color:#555;letter-spacing:-0.79px;">muc_leaf_5120_001_leaf_pair1</div>
<div class="t" style="left:390.0px;top:632.5px;font-size:26px;font-weight:400;color:#555;letter-spacing:-2.20px;">ae4</div>
<div class="t" style="left:533.0px;top:632.5px;font-size:26px;font-weight:400;color:#555;letter-spacing:-0.68px;">10.6.1.31</div>
<div class="t" style="left:698.0px;top:632.5px;font-size:26px;font-weight:400;color:#555;">a857436e-66a6-468b-99eb-a198fe0fb0ad</div>
<div class="t" style="left:1232.0px;top:632.5px;font-size:26px;font-weight:400;color:#555;letter-spacing:-0.85px;">muc_leaf_5120_001_sys004</div>
<div class="t" style="left:1609.0px;top:632.5px;font-size:26px;font-weight:400;color:#555;letter-spacing:-1.31px;">tagged</div>
<div class="t" style="left:1725.0px;top:632.5px;font-size:26px;font-weight:400;color:#555;">50</div>
<div class="t" style="left:1817.0px;top:614.5px;font-size:26px;font-weight:400;color:#555;letter-spacing:-0.78px;">Anomalous value: <b>≥ 1</b></div>
<div class="t" style="left:1817.0px;top:652.5px;font-size:26px;font-weight:400;color:#555;letter-spacing:-0.60px;">Actual value: <b>24</b></div>
<div class="t" style="left:2094.0px;top:632.5px;font-size:26px;font-weight:400;color:#c0282f;">true</div>
<div class="t" style="left:2199.0px;top:632.5px;font-size:26px;font-weight:400;color:#555;letter-spacing:-0.75px;">14 minutes ago</div>
<div class="t" style="left:-17.0px;top:750.5px;font-size:26px;font-weight:400;color:#555;letter-spacing:-0.86px;">muc_rack_border_001_leaf_pair1</div>
<div class="t" style="left:390.0px;top:750.5px;font-size:26px;font-weight:400;color:#555;letter-spacing:-2.20px;">ae3</div>
<div class="t" style="left:533.0px;top:750.5px;font-size:26px;font-weight:400;color:#555;letter-spacing:-0.68px;">10.6.1.42</div>
<div class="t" style="left:698.0px;top:750.5px;font-size:26px;font-weight:400;color:#555;">01b956ba-4815-42e0-879f-19876afc7071</div>
<div class="t" style="left:1232.0px;top:750.5px;font-size:26px;font-weight:400;color:#555;letter-spacing:-0.92px;">muc_rack_border_001_sys003</div>
<div class="t" style="left:1609.0px;top:750.5px;font-size:26px;font-weight:400;color:#555;letter-spacing:-1.31px;">tagged</div>
<div class="t" style="left:1725.0px;top:750.5px;font-size:26px;font-weight:400;color:#555;">150</div>
<div class="t" style="left:1817.0px;top:732.5px;font-size:26px;font-weight:400;color:#555;letter-spacing:-0.78px;">Anomalous value: <b>≥ 1</b></div>
<div class="t" style="left:1817.0px;top:770.5px;font-size:26px;font-weight:400;color:#555;letter-spacing:-0.60px;">Actual value: <b>24</b></div>
<div class="t" style="left:2094.0px;top:750.5px;font-size:26px;font-weight:400;color:#c0282f;">true</div>
<div class="t" style="left:2199.0px;top:750.5px;font-size:26px;font-weight:400;color:#555;letter-spacing:-0.75px;">14 minutes ago</div>
<div class="t" style="left:-17.0px;top:867.0px;font-size:26px;font-weight:400;color:#555;letter-spacing:-0.86px;">muc_rack_border_001_leaf_pair1</div>
<div class="t" style="left:390.0px;top:867.0px;font-size:26px;font-weight:400;color:#555;letter-spacing:-2.20px;">ae3</div>
<div class="t" style="left:533.0px;top:867.0px;font-size:26px;font-weight:400;color:#555;letter-spacing:-0.68px;">10.6.1.42</div>
<div class="t" style="left:698.0px;top:867.0px;font-size:26px;font-weight:400;color:#555;">01b956ba-4815-42e0-879f-19876afc7071</div>
<div class="t" style="left:1232.0px;top:867.0px;font-size:26px;font-weight:400;color:#555;letter-spacing:-0.92px;">muc_rack_border_001_sys003</div>
<div class="t" style="left:1609.0px;top:867.0px;font-size:26px;font-weight:400;color:#555;letter-spacing:-1.31px;">tagged</div>
<div class="t" style="left:1725.0px;top:867.0px;font-size:26px;font-weight:400;color:#555;">50</div>
<div class="t" style="left:1817.0px;top:849.0px;font-size:26px;font-weight:400;color:#555;letter-spacing:-0.78px;">Anomalous value: <b>≥ 1</b></div>
<div class="t" style="left:1817.0px;top:887.0px;font-size:26px;font-weight:400;color:#555;letter-spacing:-0.60px;">Actual value: <b>24</b></div>
<div class="t" style="left:2094.0px;top:867.0px;font-size:26px;font-weight:400;color:#c0282f;">true</div>
<div class="t" style="left:2199.0px;top:867.0px;font-size:26px;font-weight:400;color:#555;letter-spacing:-0.75px;">14 minutes ago</div>
</div>
</div></body></html>
